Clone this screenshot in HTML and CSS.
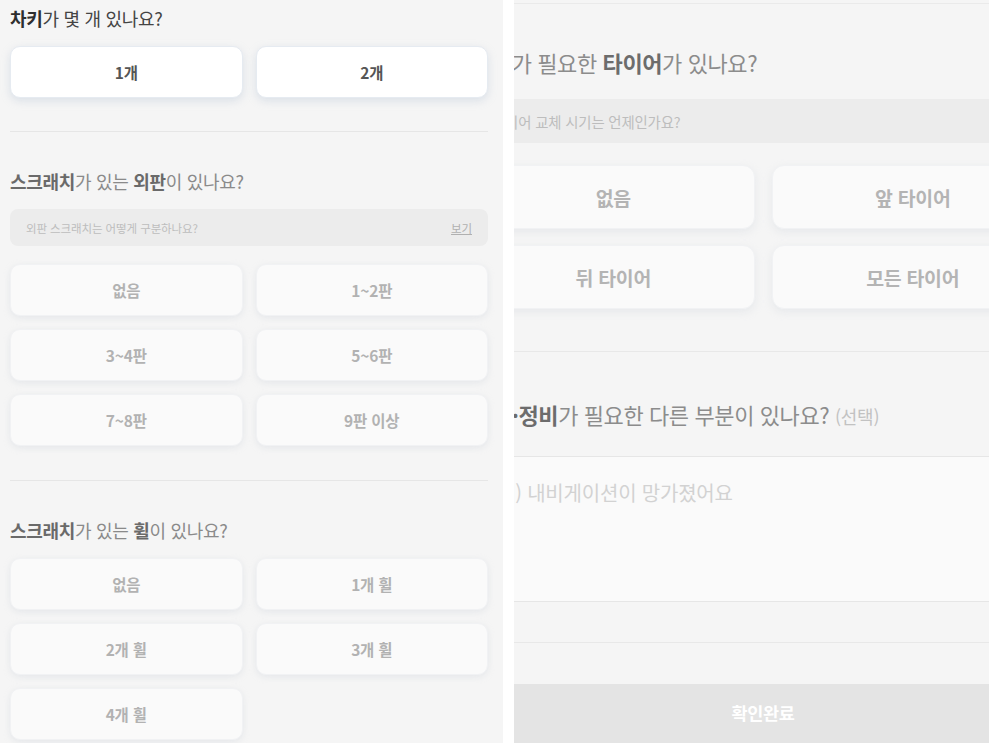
FILE: index.html
```html
<!DOCTYPE html>
<html lang="ko">
<head>
<meta charset="utf-8">
<title>차량 상태 확인</title>
<link rel="stylesheet" href="styles.css">
</head>
<body>
<div class="screen">
  <div class="panel left">
    <section class="q first active">
      <h2 class="q-title"><b>차키</b>가 몇 개 있나요?</h2>
      <div class="opts">
        <button class="opt">1개</button>
        <button class="opt">2개</button>
      </div>
    </section>
    <section class="q">
      <h2 class="q-title"><b>스크래치</b>가 있는 <b>외판</b>이 있나요?</h2>
      <div class="info"><span>외판 스크래치는 어떻게 구분하나요?</span><a class="info-link">보기</a></div>
      <div class="opts">
        <button class="opt">없음</button>
        <button class="opt">1~2판</button>
        <button class="opt">3~4판</button>
        <button class="opt">5~6판</button>
        <button class="opt">7~8판</button>
        <button class="opt">9판 이상</button>
      </div>
    </section>
    <section class="q">
      <h2 class="q-title"><b>스크래치</b>가 있는 <b>휠</b>이 있나요?</h2>
      <div class="opts">
        <button class="opt">없음</button>
        <button class="opt">1개 휠</button>
        <button class="opt">2개 휠</button>
        <button class="opt">3개 휠</button>
        <button class="opt">4개 휠</button>
      </div>
    </section>
  </div>

  <div class="panel right">
    <div class="page">
      <div class="prev"></div>
      <section class="rq">
        <h2 class="rq-title">교체가 필요한 <b>타이어</b>가 있나요?</h2>
        <div class="rinfo"><span>타이어 교체 시기는 언제인가요?</span><a class="info-link">보기</a></div>
        <div class="ropts">
          <button class="ropt">없음</button>
          <button class="ropt">앞 타이어</button>
          <button class="ropt">뒤 타이어</button>
          <button class="ropt">모든 타이어</button>
        </div>
      </section>
      <section class="rq last">
        <h2 class="rq-title"><b>수리·정비</b>가 필요한 다른 부분이 있나요? <small>(선택)</small></h2>
        <textarea class="memo" placeholder="예) 내비게이션이 망가졌어요"></textarea>
      </section>
      <div class="spacer"></div>
      <button class="submit">확인완료</button>
    </div>
  </div>
</div>
</body>
</html>
```

FILE: styles.css
```css
* { box-sizing: border-box; }
html, body { margin: 0; padding: 0; background: #ffffff; }
body {
  font-family: "Noto Sans CJK KR", "Noto Sans", sans-serif;
  width: 989px;
  height: 743px;
  overflow: hidden;
}
.screen {
  display: flex;
  gap: 11px;
  height: 743px;
}
.panel {
  background: #f5f5f5;
  height: 743px;
  overflow: hidden;
}
.left {
  width: 503px;
  flex: none;
  padding: 0 15px 0 10px;
}
.right {
  flex: 1;
}

/* left questions */
.q {
  padding: 37px 0 34px;
  border-top: 1px solid #e6e6e6;
}
.q.first {
  border-top: none;
  padding-top: 6px;
  padding-bottom: 33px;
}
.q-title {
  margin: 0 0 16px;
  font-size: 18px;
  line-height: 24px;
  font-weight: 400;
  letter-spacing: -0.3px;
  color: #8a8a8a;
}
.q-title b { font-weight: 700; color: #6a6a6a; }
.q.active .q-title { color: #444444; }
.q.active .q-title b { color: #2e2e2e; }

.info {
  display: flex;
  justify-content: space-between;
  align-items: center;
  height: 37px;
  padding: 0 16px;
  margin-bottom: 18px;
  background: #ececec;
  border-radius: 8px;
  font-size: 11.5px;
  letter-spacing: -0.1px;
  color: #bdbdbd;
}
.info-link {
  color: #b0b0b0;
  text-decoration: underline;
}

.opts {
  display: grid;
  grid-template-columns: 1fr 1fr;
  gap: 13px;
}
.opt {
  height: 52px;
  border: 1px solid #f1f2f4;
  border-radius: 10px;
  background: #fafafa;
  box-shadow: 0 2px 6px rgba(200, 206, 216, 0.35);
  font-family: inherit;
  font-size: 15.5px;
  font-weight: 700;
  letter-spacing: -0.2px;
  color: #b2b2b2;
  padding: 0;
}
.q.active .opt {
  background: #ffffff;
  border-color: #e6ebf1;
  box-shadow: 0 3px 8px rgba(170, 185, 205, 0.35);
  color: #555555;
}

/* right panel (scaled, scrolled view) */
.page {
  width: 606px;
  margin-left: -54px;
  padding: 0 12px;
}
.prev {
  height: 4px;
  border-bottom: 1px solid #eaeaea;
}
.rq {
  padding: 43px 0 42px;
  border-bottom: 1px solid #e8e8e8;
}
.rq-title {
  margin: 0 0 22px;
  font-size: 22px;
  line-height: 30px;
  font-weight: 400;
  letter-spacing: -0.4px;
  color: #8c8c8c;
}
.rq-title b { font-weight: 700; color: #6c6c6c; }
.rq-title small {
  font-size: 18px;
  color: #c2c2c2;
  letter-spacing: -0.3px;
}
.rinfo {
  display: flex;
  justify-content: space-between;
  align-items: center;
  height: 44px;
  padding: 0 20px;
  margin-bottom: 22px;
  background: #ececec;
  border-radius: 9px;
  font-size: 14.4px;
  letter-spacing: -0.15px;
  color: #bdbdbd;
}
.ropts {
  display: grid;
  grid-template-columns: 1fr 1fr;
  column-gap: 17px;
  row-gap: 16px;
}
.ropt {
  height: 64px;
  border: 1px solid #f1f2f4;
  border-radius: 12px;
  background: #fafafa;
  box-shadow: 0 3px 8px rgba(200, 206, 216, 0.3);
  font-family: inherit;
  font-size: 19.4px;
  font-weight: 700;
  letter-spacing: -0.25px;
  color: #b4b4b4;
  padding: 0;
}
.rq.last {
  padding-top: 47px;
  padding-bottom: 40px;
}
.rq.last .rq-title { margin-bottom: 25px; }
.memo {
  display: block;
  width: 100%;
  height: 146px;
  margin: 0;
  padding: 22px 20px 0 25px;
  border: none;
  border-top: 1px solid #e6e6e6;
  border-bottom: 1px solid #e6e6e6;
  background: #fafafa;
  resize: none;
  font-family: inherit;
  font-size: 20px;
  line-height: 28px;
  letter-spacing: -0.2px;
  color: #555555;
  outline: none;
}
.memo::placeholder { color: #d2d2d2; }
.spacer { height: 41px; }
.submit {
  display: block;
  width: 606px;
  margin-left: -12px;
  height: 60px;
  padding: 0 0 4px;
  border: none;
  background: #e4e4e4;
  font-family: inherit;
  font-size: 17.5px;
  font-weight: 700;
  color: #ffffff;
  letter-spacing: -0.3px;
}
```
